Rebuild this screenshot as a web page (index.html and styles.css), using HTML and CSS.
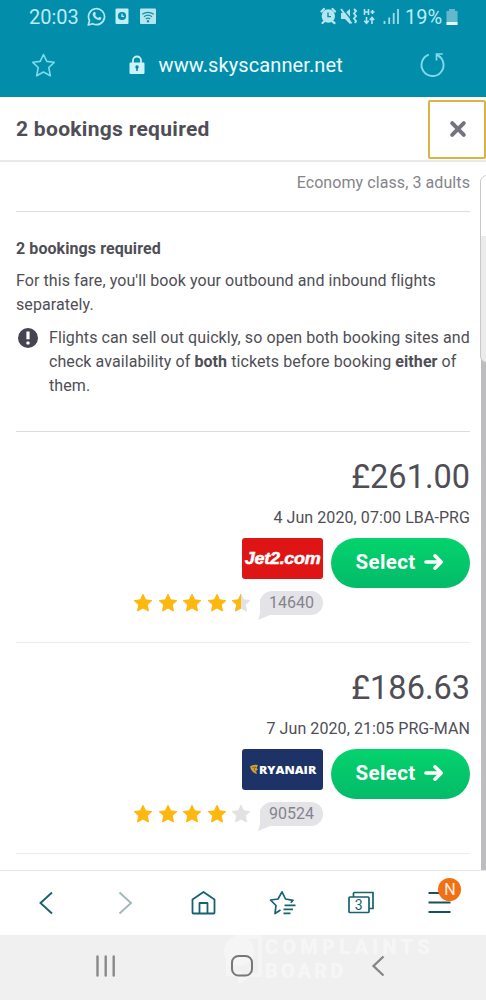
FILE: index.html
```html
<!DOCTYPE html>
<html lang="en">
<head>
<meta charset="utf-8">
<title>2 bookings required</title>
<link rel="stylesheet" href="styles.css">
</head>
<body>
<svg width="0" height="0" class="defs">
  <symbol id="star" viewBox="0 0 20 20"><path d="M10 1.3 L12.6 6.8 L18.8 7.6 L14.3 11.8 L15.5 18 L10 15 L4.5 18 L5.7 11.8 L1.2 7.6 L7.4 6.8 Z" stroke-width="1" stroke-linejoin="round" stroke="currentColor" fill="currentColor"/></symbol>
  <symbol id="arrow" viewBox="0 0 20 18"><path d="M2 9H17M11 2.8L17.2 9L11 15.2" fill="none" stroke="#fff" stroke-width="3.6" stroke-linecap="round" stroke-linejoin="round"/></symbol>
</svg>
<div class="phone">
  <div class="top">
    <div class="status">
      <span class="clock">20:03</span>
      <svg class="status-left" width="72" height="20" viewBox="0 0 72 20">
        <path d="M1.3 18l1.2-4.5A8 8 0 1 1 5.700 16.700Z" fill="none" stroke="#b4e9f3" stroke-width="1.7" stroke-linejoin="round"/>
        <path d="M6.500 5.300c.8-.9 1.600-.6 1.900.2l.5 1.400-.8 1.200c.8 1.500 1.700 2.300 3.100 2.900l1.100-1.200 2.100 1c.1 1.600-1.300 2.500-2.600 2.300C8.300 12.600 6 10 5.700 7.500c0-.9.300-1.600.8-2.200Z" fill="#b4e9f3"/>
        <rect x="28.500" y="1.500" width="13" height="15.500" rx="1" fill="#c0edf6"/><circle cx="35" cy="9" r="4.100" fill="#058ea9"/><path d="M35 6.700V9.300H37.200" stroke="#c0edf6" stroke-width="1.300" fill="none"/>
        <rect x="53" y="1.500" width="16" height="15.500" rx="1" fill="#b4e6f0"/>
        <path d="M55.200 7.300q5.800-4 11.600 0M57 9.700q4-3 8 0M58.800 12q2.200-1.700 4.400 0" fill="none" stroke="#178da5" stroke-width="1.300"/><circle cx="61" cy="14.200" r="1.200" fill="#178da5"/>
      </svg>
      <svg class="status-right" width="82" height="20" viewBox="0 0 82 20">
        <g fill="none" stroke="#b4e5f0" stroke-width="2.200" stroke-linecap="round"><path d="M1.500 4.500L4 2M12.500 2L15 4.500M4 14.500L2.500 16M12.500 14.500L14.500 16"/></g>
        <circle cx="8.300" cy="9" r="6.700" fill="#b4e5f0"/><path d="M8 5.500V9.600H11" fill="none" stroke="#058ea9" stroke-width="1.400"/>
        <path d="M21 6H25L30 2V17L25 12H21Z" fill="#b4e5f0"/><path d="M22.500 1.500L32 13.500" stroke="#058ea9" stroke-width="1.300"/><path d="M21 2L31.500 16.500" stroke="#b4e5f0" stroke-width="1.800"/>
        <path d="M34 2l2 2-2 2.500 2 2.500-2 2.500 2 2.500-1 2" fill="none" stroke="#b4e5f0" stroke-width="1.900"/>
        <path d="M44.500 2V8M48.500 2V8M44.500 5H48.500M50.500 5H54.500M52.500 3V7" stroke="#b4e5f0" stroke-width="1.600"/>
        <path d="M46.500 10V16M44.300 13.700l2.200 2.500 2.200-2.500M52 17V11M49.800 13l2.200-2.500 2.200 2.500" stroke="#b4e5f0" stroke-width="1.600" fill="none"/>
        <path d="M64.500 14V17M69.200 10.500V17M73.700 6V17M78 2V17" stroke="#9fdae8" stroke-width="1.800"/>
      </svg>
      <span class="percent">19%</span>
      <svg class="battery" width="12" height="17" viewBox="0 0 12 17"><path d="M3 0H9V2H11.500V16H.5V2H3Z" fill="#63b8cd"/><rect x=".5" y="13" width="11" height="3" fill="#e0fbff"/></svg>
    </div>
    <div class="address">
      <svg class="fav" width="26" height="26" viewBox="0 0 26 26"><path d="M12.500 2.500L15.800 9.400L23.200 10.300L17.800 15.500L19.300 23.800L12.500 20L5.700 23.800L7.200 15.500L1.800 10.300L9.200 9.400Z" fill="none" stroke="#7fd9ed" stroke-width="1.600" stroke-linejoin="round"/></svg>
      <svg class="lock" width="16" height="20" viewBox="0 0 16 20"><path d="M4 8V5.500a4 4 0 0 1 8 0V8" fill="none" stroke="#c9f4fc" stroke-width="1.800"/><rect x="0.500" y="7.500" width="15" height="11.500" rx="1.200" fill="#c9f4fc"/><circle cx="8" cy="12" r="1.700" fill="#07839d"/><path d="M8 12V16" stroke="#07839d" stroke-width="1.500"/></svg>
      <span class="url">www.skyscanner.net</span>
      <svg class="reload" width="28" height="28" viewBox="0 0 28 28"><path d="M10.800 3.700A11 11 0 1 0 20 4.500" fill="none" stroke="#7fd9ed" stroke-width="1.900"/><path d="M24.800 3H18.500V9.500M18.500 3L23 7" fill="none" stroke="#7fd9ed" stroke-width="1.700"/></svg>
    </div>
  </div>
  <header class="title-bar">
    <h1>2 bookings required</h1>
    <button class="close" aria-label="Close"><svg width="18" height="18" viewBox="0 0 18 18"><path d="M3.200 3.200L14.800 14.800M14.800 3.200L3.200 14.800" stroke="#74737e" stroke-width="4" stroke-linecap="round"/></svg></button>
  </header>
  <main class="page">
    <p class="cabin">Economy class, 3 adults</p>
    <section class="notice">
      <h2>2 bookings required</h2>
      <p class="intro">For this fare, you'll book your outbound and inbound flights<br>separately.</p>
      <div class="alert">
        <svg width="20" height="20" viewBox="0 0 20 20"><circle cx="10" cy="10" r="10" fill="#464352"/><path d="M10 3.500V11.300" stroke="#fff" stroke-width="3.200"/><rect x="8.400" y="13.600" width="3.200" height="3" rx=".8" fill="#fff"/></svg>
        <p>Flights can sell out quickly, so open both booking sites and<br>check availability of <b>both</b> tickets before booking <b>either</b> of<br>them.</p>
      </div>
    </section>
    <section class="offer">
      <div class="price">£261.00</div>
      <div class="date">4 Jun 2020, 07:00 LBA-PRG</div>
      <div class="deal">
        <div class="supplier">
          <div class="logo jet2"><span>Jet2.com</span></div>
          <div class="rating">
            <div class="stars"><svg><use href="#star"/></svg><svg><use href="#star"/></svg><svg><use href="#star"/></svg><svg><use href="#star"/></svg><svg viewBox="0 0 20 20"><use href="#star" class="off"/><use href="#star" class="left"/></svg></div>
            <span class="count">14640</span>
          </div>
        </div>
        <button class="select"><span>Select</span><svg width="20" height="18"><use href="#arrow"/></svg></button>
      </div>
    </section>
    <section class="offer">
      <div class="price">£186.63</div>
      <div class="date">7 Jun 2020, 21:05 PRG-MAN</div>
      <div class="deal">
        <div class="supplier">
          <div class="logo ryanair"><svg width="9" height="11" viewBox="0 0 9 11"><path d="M0 2.500Q3 0 8 1L6.500 4L8 5.500L6 7L7 10Q1.500 9 0 2.500Z" fill="#d1a432"/><path d="M2 3.500L6 3L4 5L5.500 7.500" fill="none" stroke="#6f6233" stroke-width=".8"/></svg><span>RYANAIR</span></div>
          <div class="rating">
            <div class="stars"><svg><use href="#star"/></svg><svg><use href="#star"/></svg><svg><use href="#star"/></svg><svg><use href="#star"/></svg><svg class="off"><use href="#star"/></svg></div>
            <span class="count">90524</span>
          </div>
        </div>
        <button class="select"><span>Select</span><svg width="20" height="18"><use href="#arrow"/></svg></button>
      </div>
    </section>
    <div class="edge"></div>
    <div class="handle"></div>
  </main>
  <nav class="toolbar">
    <svg viewBox="0 0 30 30"><path d="M21 4.500L9.500 15L21 25.500" fill="none" stroke="#1b5f6b" stroke-width="1.900"/></svg>
    <svg viewBox="0 0 30 30"><path d="M9.500 4.500L21 15L9.500 25.500" fill="none" stroke="#9fb8b8" stroke-width="1.900"/></svg>
    <svg viewBox="0 0 30 30"><path d="M4.500 11.500L15.500 4L26.500 11.500V24.500Q26.500 25.500 25.500 25.500H5.500Q4.500 25.500 4.500 24.500ZM11.500 25.500V15H19.500V25.500" fill="none" stroke="#176170" stroke-width="1.800" stroke-linejoin="round"/></svg>
    <svg viewBox="0 0 30 30"><path d="M13.500 22L8 25.500L9 17.500L3.500 12L11 11L15 3.800L18.500 11L26 12.300L23.800 14.800M17.500 17.300H28.500M16.500 21.300H26M16.500 25.300H23.500" fill="none" stroke="#176170" stroke-width="1.700" stroke-linejoin="round"/></svg>
    <span class="tabs"><svg viewBox="0 0 30 30"><path d="M7.500 9V5.200Q7.500 4.500 8.300 4.500H27V20.500H23" fill="none" stroke="#176170" stroke-width="1.700"/><rect x="3" y="9" width="20" height="15.500" rx="1" fill="#fff" stroke="#176170" stroke-width="1.700"/></svg><i>3</i></span>
    <span class="menu"><svg viewBox="0 0 30 30"><path d="M4.500 5H26.500M4.500 14.500H26.500M4.500 24H26.500" stroke="#1b4f59" stroke-width="1.800"/></svg><i>N</i></span>
  </nav>
  <footer class="system">
    <div class="watermark">
      <svg width="38" height="48" viewBox="0 0 38 48"><circle cx="15" cy="16" r="15" fill="#f5f5f5"/><path d="M10 2H36V40H25L16 47V39H4V22" fill="none" stroke="#f5f5f5" stroke-width="4"/></svg>
      <div class="words"><div>COMPLAINTS</div><div class="second">BOARD</div></div>
    </div>
    <svg class="sys" viewBox="0 0 30 30"><path d="M6.500 5.500V24.500M14.700 5.500V24.500M22.700 5.500V24.500" stroke="#898989" stroke-width="2.400" stroke-linecap="round"/></svg>
    <svg class="sys" viewBox="0 0 30 30"><rect x="5" y="5" width="20" height="19.500" rx="6.500" fill="none" stroke="#777" stroke-width="2"/></svg>
    <svg class="sys" viewBox="0 0 30 30"><path d="M20.500 5.500L10.500 15L20.500 24.500" fill="none" stroke="#858585" stroke-width="2.300"/></svg>
  </footer>
</div>
</body>
</html>
```
FILE: styles.css
```css
* { box-sizing: border-box; }
body { margin: 0; font-family: Roboto, "Liberation Sans", sans-serif; color: #4f4e56; background: #fff; }
h1, h2, p { margin: 0; }
button { font-family: inherit; border: 0; padding: 0; margin: 0; }
i { font-style: normal; }
.defs { position: absolute; }
.phone { width: 486px; height: 1000px; display: flex; flex-direction: column; overflow: hidden; }

.top { height: 97px; background: #028eaa; flex: none; }
.status { height: 34px; display: flex; align-items: center; padding-left: 29px; color: #b9ecf6; }
.clock { width: 58px; font-size: 20px; line-height: 34px; }
.status-left { margin-top: -1px; }
.status-right { margin-left: 161px; margin-top: -1px; }
.percent { margin-left: 3px; width: 39px; font-size: 20px; line-height: 34px; }
.battery { margin-left: 2px; }
.address { height: 62px; display: flex; align-items: center; padding-left: 31px; }
.lock { margin-left: 72px; }
.url { margin-left: 13.500px; width: 187px; font-size: 20px; letter-spacing: .1px; line-height: 32px; color: #effdff; white-space: nowrap; }
.reload { margin-left: 72px; }

.title-bar { height: 65px; flex: none; display: flex; justify-content: space-between; align-items: flex-start; padding: 3px 0 0 16px; border-bottom: 2px solid #e9e8ec; }
h1 { font-size: 21px; letter-spacing: .3px; line-height: 58px; font-weight: 700; }
.close { width: 58px; height: 59px; padding-left: 1px; padding-bottom: 2px; background: #fff; border: 2px solid #dcb343; border-radius: 2px; display: flex; align-items: center; justify-content: center; }

.page { position: relative; height: 708px; flex: none; padding: 8px 16px 0 16px; overflow: hidden; }
.cabin { height: 42px; border-bottom: 1px solid #dddcdf; font-size: 16px; letter-spacing: .08px; line-height: 26px; color: #85848c; text-align: right; }
.notice { height: 220px; padding-top: 25px; border-bottom: 1px solid #dddcdf; font-size: 16px; letter-spacing: .08px; line-height: 24.300px; }
.notice p { white-space: nowrap; }
h2 { font-size: 16px; line-height: 24px; font-weight: 700; margin-bottom: 8px; }
.alert { display: flex; gap: 11px; margin: 8px 0 0 2px; }
.alert > svg { margin-top: 2px; flex: none; }

.offer { height: 211px; padding-top: 25px; border-bottom: 1px solid #ecebed; text-align: right; }
.price { font-size: 32.500px; line-height: 40px; }
.date { margin-top: 9px; font-size: 16px; letter-spacing: .08px; line-height: 24px; }
.deal { margin-top: 8px; display: flex; justify-content: flex-end; gap: 8px; }
.supplier { display: flex; flex-direction: column; align-items: flex-end; }
.logo { width: 81px; height: 41px; border-radius: 3px; color: #fff; display: flex; align-items: center; justify-content: center; }
.jet2 { background: #df1415; font: italic 900 17px/41px "Liberation Sans", sans-serif; letter-spacing: -.3px; -webkit-text-stroke: .5px #fff; }
.jet2 span { transform: scaleX(1.06); }
.ryanair { background: #1d3267; font: 800 11px/38px "Open Sans", sans-serif; gap: 3px; padding-right: 1px; }
.ryanair span { transform: scaleX(1.12); }
.rating { display: flex; margin-top: 12px; gap: 9px; }
.stars { display: flex; gap: 4.400px; padding-top: 2px; color: #fcb80e; }
.stars svg { width: 20px; height: 20px; }
.stars .off { color: #e2e1e4; }
.left { clip-path: inset(0 50% 0 0); }
.count { position: relative; width: 63px; height: 24px; border-radius: 12px; background: #e4e3e8; color: #85848c; font-size: 16px; line-height: 24px; text-align: center; }
.count::before { content: ""; position: absolute; left: -2px; top: 7px; width: 14px; height: 22px; background: #e4e3e8; clip-path: polygon(2px 0, 14px 14px, 12px 17px, 0 22px, 2px 15px); }
.select { width: 139px; height: 50px; border-radius: 25px; background: linear-gradient(#04d36d, #04bb68); color: #fff; font-size: 20.500px; letter-spacing: .4px; line-height: 48px; font-weight: 700; display: flex; align-items: center; justify-content: center; gap: 8px; padding: 0 2px 2px 0; }
.edge { position: absolute; right: 0; top: 190px; bottom: 0; width: 5px; background: #bdbdbf; }
.handle { position: absolute; right: -2px; top: 13px; width: 8px; height: 188px; border: 1px solid #c8c8ca; border-radius: 7px 0 0 7px; background: linear-gradient(#fff 60px, #ebebeb 60px); }

.toolbar { height: 65px; flex: none; border-top: 1px solid #e6e6e8; display: flex; align-items: center; padding-left: 31px; gap: 48.700px; }
.toolbar svg { width: 30px; height: 30px; display: block; }
.tabs, .menu { position: relative; }
.tabs i { position: absolute; left: 3px; top: 9px; width: 20px; text-align: center; font-size: 14px; line-height: 16px; color: #176170; }
.menu i { position: absolute; left: 14px; top: -10px; width: 23px; height: 23px; border-radius: 50%; background: #f17013; color: #fff1e2; font-size: 16px; line-height: 24px; text-align: center; }
.system { position: relative; height: 65px; flex: none; background: #f0f0f0; display: flex; align-items: flex-start; padding: 16px 0 0 91px; gap: 106px; }
.sys { position: relative; width: 30px; height: 30px; }
.watermark { position: absolute; left: 224px; top: 0; display: flex; gap: 3px; font: 900 20px/24px Roboto, sans-serif; letter-spacing: 4.200px; color: #f6f6f6; }
.words .second { letter-spacing: 3px; }
```
